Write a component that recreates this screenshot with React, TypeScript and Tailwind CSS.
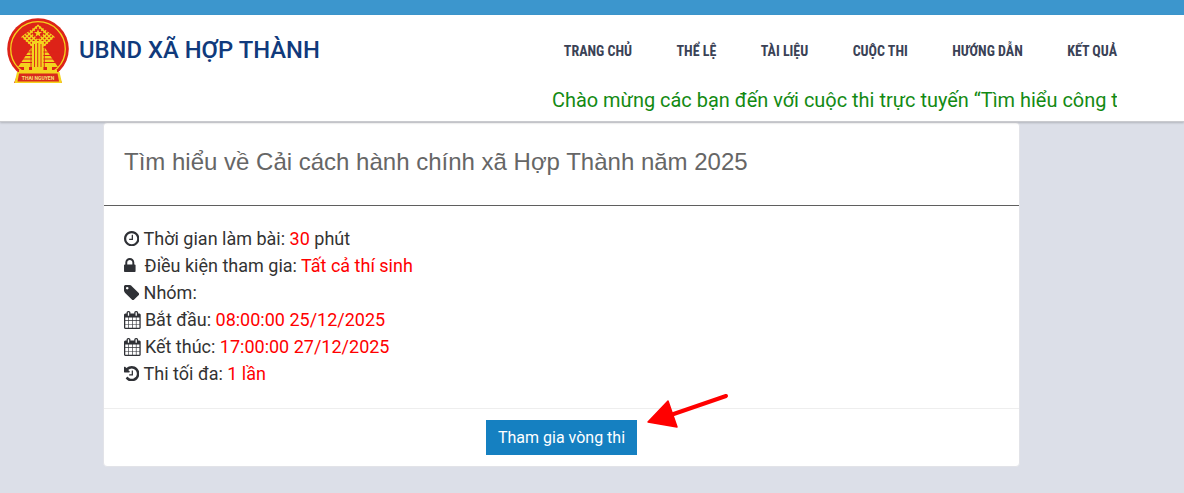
function Fa({ box, d, w, h, cls }: { box: string; d: string; w: string; h: string; cls?: string }) {
  return (
    <svg viewBox={box} style={{ width: w, height: h }} className={"shrink-0 " + (cls ?? "")} fill="#2f3136" aria-hidden>
      <path d={d} />
    </svg>
  );
}

const clock = "M896 504v448q0 14-9 23t-23 9H544q-14 0-23-9t-9-23v-64q0-14 9-23t23-9h224V504q0-14 9-23t23-9h64q14 0 23 9t9 23zm416 352q0-148-73-273t-198-198-273-73-273 73-198 198-73 273 73 273 198 198 273 73 273-73 198-198 73-273zm224 0q0 209-103 385.500T1153 1521t-385 103-385.500-103T103 1241 0 856t103-385.500T383 191 768 88t385.500 103T1433 471t103 385z";
const lock = "M320 768h512V576q0-106-75-181t-181-75-181 75-75 181v192zm832 96v576q0 40-28 68t-68 28H96q-40 0-68-28t-28-68V864q0-40 28-68t68-28h32V576q0-184 132-316t316-132 316 132 132 316v192h32q40 0 68 28t28 68z";
const tag = "M448 448q0-53-37.500-90.500T320 320t-90.500 37.500T192 448t37.500 90.500T320 576t90.500-37.500T448 448zm1067 576q0 53-37 90l-491 492q-39 37-91 37-53 0-90-37L91 890q-38-37-64.500-101T0 672V256q0-52 38-90t90-38h416q53 0 117 26.500T752 219l715 714q48 38 48 91z";
const calendar = "M128 1664h288v-288H128v288zm352 0h320v-288H480v288zm-352-352h288V992H128v320zm352 0h320V992H480v320zM128 928h288V640H128v288zm736 736h320v-288H864v288zM480 928h320V640H480v288zm768 736h288v-288h-288v288zm-384-352h320V992H864v320zM512 448V160q0-13-9.500-22.500T480 128h-64q-13 0-22.500 9.500T384 160v288q0 13 9.500 22.500T416 480h64q13 0 22.500-9.500T512 448zm736 864h288V992h-288v320zm-384-384h320V640H864v288zm384 0h288V640h-288v288zm32-480V160q0-13-9.500-22.500T1248 128h-64q-13 0-22.500 9.500T1152 160v288q0 13 9.500 22.500t22.500 9.500h64q13 0 22.500-9.500t9.500-22.500zm384-64v1280q0 52-38 90t-90 38H128q-52 0-90-38t-38-90V384q0-52 38-90t90-38h128v-96q0-66 47-113T416 0h64q66 0 113 47t47 113v96h384v-96q0-66 47-113t113-47h64q66 0 113 47t47 113v96h128q52 0 90 38t38 90z";
const history = "M1536 896q0 156-61 298t-164 245-245 164-298 61q-172 0-327-72.500T177 1387q-7-10-6.500-22.500t8.500-20.500l137-138q10-9 25-9 16 2 23 12 73 95 179 147t225 52q104 0 198.500-40.500T1130 1258t109.500-163.500T1280 896t-40.500-198.500T1130 534 966.500 424.500 768 384q-98 0-188 35.500T420 521l137 138q31 30 14 69-17 40-59 40H64q-26 0-45-19T0 704V256q0-42 40-59 39-17 69 14l130 129q107-101 244.500-156.500T768 128q156 0 298 61t245 164 164 245 61 298zM896 608v448q0 14-9 23t-23 9H544q-14 0-23-9t-9-23v-64q0-14 9-23t23-9h224V608q0-14 9-23t23-9h64q14 0 23 9t9 23z";

function Logo() {
  const lines = [];
  for (let i = -8; i <= 8; i++) {
    const o = i * 4.4;
    lines.push(<path key={"p" + i} d={`M${31 + o - 25} ${16 + 25}L${31 + o + 25} ${16 - 25}`} />);
    lines.push(<path key={"q" + i} d={`M${31 + o - 25} ${16 - 25}L${31 + o + 25} ${16 + 25}`} />);
  }
  return (
    <svg viewBox="0 0 63 66" className="w-[63px] h-[66px] shrink-0" aria-hidden>
      <defs>
        <clipPath id="lattice">
          <polygon points="31,6.500 48,19 37,29 31,24 25,29 14,19" />
        </clipPath>
      </defs>
      <circle cx="31" cy="31" r="30.800" fill="#dd2318" />
      <path d="M9 60h44l2 5H7z" fill="#dd2318" />
      <circle cx="31" cy="31" r="27.300" fill="none" stroke="#f4d31e" strokeWidth="1.300" />
      <g clipPath="url(#lattice)" stroke="#f4d31e" strokeWidth="1.500">{lines}</g>
      <path d="M31 9.500l6 6-6 6-6-6z" fill="#dd2318" />
      <path d="M31 11.200l1.100 2.800h3l-2.400 1.800.9 2.900-2.600-1.700-2.600 1.700.9-2.900-2.400-1.800h3z" fill="#f4d31e" />
      <path d="M24 30L11 49h40L38 30z" fill="#f4d31e" />
      <path d="M10 34h42M10 37.500h42M10 41h42M10 44.500h42" stroke="#dd2318" strokeWidth="1" />
      <path d="M25 23h11.500v32H25z" fill="#f4d31e" />
      <path d="M24 28v26M27.500 26v28M30.700 25v29M34 26v28M37.300 28v26" stroke="#dd2318" strokeWidth="0.900" />
      <path d="M12 55v-3h5v-3h5v3h4v-3h10v3h4v-3h5v3h5v3z" fill="#f4d31e" />
      <path d="M10 54h42.500l2.500 11H7.500z" fill="#f4d31e" />
      <path d="M12 55.500h38.500l1.500 8H10.500z" fill="#d9291c" />
      <text x="31" y="61.800" textAnchor="middle" fontSize="5" fill="#f8e27a" fontFamily="Roboto, sans-serif" fontWeight="700">THAI NGUYEN</text>
    </svg>
  );
}

const nav = ["TRANG CHỦ", "THỂ LỆ", "TÀI LIỆU", "CUỘC THI", "HƯỚNG DẪN", "KẾT QUẢ"];

function Row({ icon, label, value, after }: { icon: React.ReactNode; label: string; value?: string; after?: string }) {
  return (
    <div className="flex items-center h-[27px]">
      <span className="flex items-center">{icon}</span>
      <span className="whitespace-pre">
        {label}
        {value ? <span className="text-[#ff0000]">{value}</span> : null}
        {after}
      </span>
    </div>
  );
}

export default function App() {
  return (
    <div className="relative h-[493px] w-[1184px] overflow-hidden bg-[#dcdfe8] font-['Roboto',sans-serif]">
      <div className="h-[15px] bg-[#3c96cd]" />
      <header className="h-[107px] bg-white border-b border-[#c9cace] shadow-[0_1px_2px_rgba(0,0,0,0.2)] pl-[7px] pr-[67px] relative z-10">
        <div className="flex items-start h-[68px] pt-[3px]">
          <Logo />
          <div className="ml-[9px] mt-[17px] text-[23.800px] leading-[30px] font-medium text-[#103a7c] whitespace-nowrap">UBND XÃ HỢP THÀNH</div>
          <nav className="ml-auto flex gap-[44.400px] pt-[21px] text-[#3a4256] text-[14px] leading-[24px] font-bold [font-stretch:75%]">
            {nav.map((n) => (
              <span key={n} className="whitespace-nowrap">{n}</span>
            ))}
          </nav>
        </div>
        <div className="ml-auto w-[565px] overflow-hidden whitespace-nowrap text-[19.950px] leading-[34px] text-[#138a13]">
          Chào mừng các bạn đến với cuộc thi trực tuyến “Tìm hiểu công tác cải cách hành chính”
        </div>
      </header>
      <main className="mx-[103px] w-[917px] h-[345px] bg-white border border-[#e2e3e8] rounded-[4px] flex flex-col">
        <div className="h-[83px] border-b border-[#5f5f5f] px-[20px] pt-[21px] font-['Liberation_Sans',sans-serif] text-[24px] leading-[36px] text-[#666666]">
          Tìm hiểu về Cải cách hành chính xã Hợp Thành năm 2025
        </div>
        <div className="h-[203px] border-b border-[#eeeeee] px-[20px] pt-[19px] text-[18px] text-[#333333]">
          <Row icon={<Fa box="0 88 1536 1536" d={clock} w="15.400px" h="15.400px" cls="mr-[4.200px]" />} label="Thời gian làm bài: " value="30" after=" phút" />
          <Row icon={<Fa box="0 128 1152 1408" d={lock} w="11.600px" h="14.100px" cls="mr-[9px]" />} label="Điều kiện tham gia: " value="Tất cả thí sinh" />
          <Row icon={<Fa box="0 128 1515 1536" d={tag} w="15.200px" h="15.400px" cls="mr-[4.400px]" />} label="Nhóm:" />
          <Row icon={<Fa box="0 0 1664 1792" d={calendar} w="16.700px" h="18px" cls="mr-[4.200px]" />} label="Bắt đầu: " value="08:00:00 25/12/2025" />
          <Row icon={<Fa box="0 0 1664 1792" d={calendar} w="16.700px" h="18px" cls="mr-[4.200px]" />} label="Kết thúc: " value="17:00:00 27/12/2025" />
          <Row icon={<Fa box="0 128 1536 1536" d={history} w="15.400px" h="15.400px" cls="mr-[4.200px]" />} label="Thi tối đa: " value="1 lần" />
        </div>
        <div className="flex-1 flex justify-center pt-[11px]">
          <button className="w-[151px] h-[35px] bg-[#1580c1] text-white text-[16px] font-[450]">Tham gia vòng thi</button>
        </div>
      </main>
      <svg className="absolute left-[640px] top-[388px] w-[95px] h-[48px]" viewBox="640 388 95 48" aria-hidden>
        <path d="M726 396L662 418" stroke="#ff0000" strokeWidth="4" strokeLinecap="round" />
        <path d="M648 422L668 401L677 427Z" fill="#ff0000" stroke="#ff0000" strokeWidth="1.500" strokeLinejoin="round" />
      </svg>
    </div>
  );
}
